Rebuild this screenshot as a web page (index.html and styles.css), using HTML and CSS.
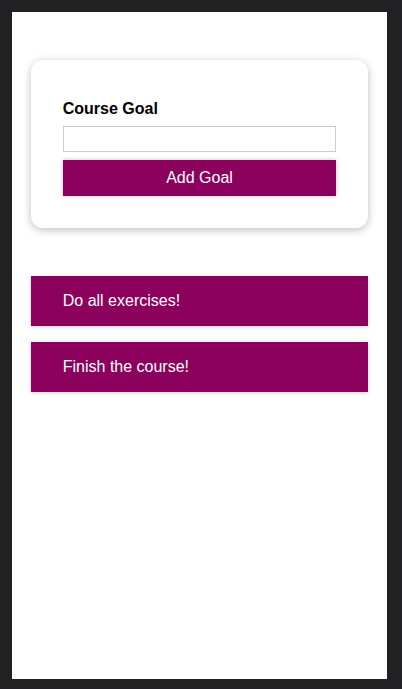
FILE: index.html
```html
<!DOCTYPE html>
<html lang="en">
<head>
<meta charset="utf-8">
<title>Course Goals</title>
<link rel="stylesheet" href="styles.css">
</head>
<body>
<div class="screen">
  <section class="goal-form">
    <form>
      <div class="form-control">
        <label for="goal">Course Goal</label>
        <input id="goal" type="text">
      </div>
      <button class="button" type="submit">Add Goal</button>
    </form>
  </section>
  <section class="goals">
    <ul class="goal-list">
      <li class="goal-item">Do all exercises!</li>
      <li class="goal-item">Finish the course!</li>
    </ul>
  </section>
</div>
</body>
</html>
```

FILE: styles.css
```css
* { box-sizing: border-box; }

html, body { margin: 0; }

body {
  background: #212123;
  padding: 12px 15px 10px 12px;
  font-family: "Liberation Sans", Arial, sans-serif;
  font-size: 16px;
}

.screen {
  width: 375px;
  height: 667px;
  background: #fff;
  overflow: hidden;
  display: flow-root;
}

.goal-form {
  width: 90%;
  margin: 48px auto;
  padding: 32px;
  border-radius: 12px;
  background: #fff;
  box-shadow: 0 2px 8px rgba(0, 0, 0, 0.26);
}

.goal-form form { margin: 0; }

.form-control { margin: 8px 0; }

.form-control label {
  display: block;
  font-weight: bold;
  margin-bottom: 8px;
  color: #000;
}

.form-control input {
  display: block;
  width: 100%;
  border: 1px solid #ccc;
  font: inherit;
  line-height: 24px;
  height: 26px;
  padding: 0 4px;
  margin: 0;
}

.button {
  display: block;
  width: 100%;
  font: inherit;
  padding: 8px 24px;
  margin: 0;
  border: 1px solid #8b005d;
  color: #fff;
  background: #8b005d;
  box-shadow: 0 0 4px rgba(0, 0, 0, 0.26);
  line-height: 18px;
}

.goals {
  width: 90%;
  margin: 48px auto;
}

.goal-list {
  list-style: none;
  margin: 0;
  padding: 0;
}

.goal-item {
  margin: 16px 0;
  background: #8b005d;
  box-shadow: 0 1px 4px rgba(0, 0, 0, 0.2);
  color: #fff;
  padding: 16px 32px;
  line-height: 18px;
}
```
